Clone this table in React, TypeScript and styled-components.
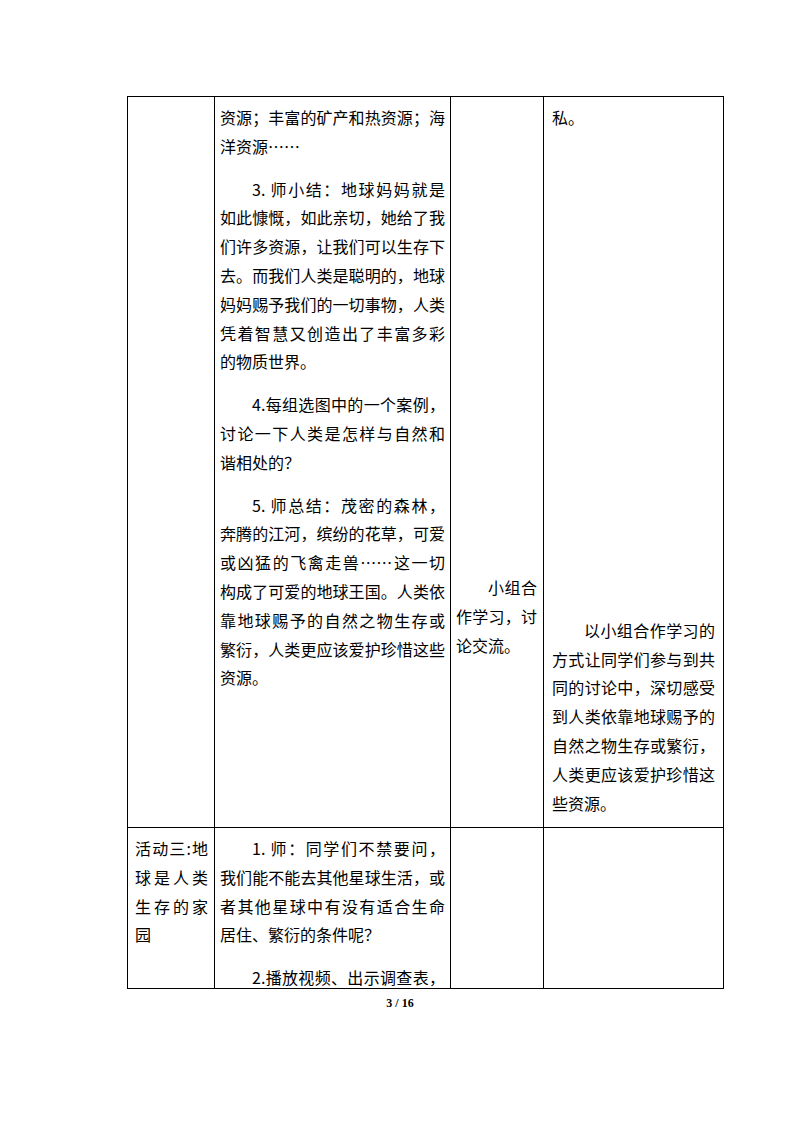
import React from "react";
import styled, { createGlobalStyle } from "styled-components";

const GlobalStyle = createGlobalStyle`
  html, body {
    margin: 0;
    padding: 0;
    background: #ffffff;
  }
  body {
    font-family: "Noto Sans CJK SC", "Noto Sans", sans-serif;
    color: #000;
  }
`;

const Page = styled.div`
  width: 794px;
  height: 1123px;
  box-sizing: border-box;
  padding-top: 96px;
  background: #fff;
  overflow: hidden;
`;

const Table = styled.div`
  margin-left: 127px;
  width: 597px;
  display: grid;
  grid-template-columns: 87px 236px 93px 180px;
  grid-template-rows: 731px 161px;
  border-left: 1px solid #000;
  border-top: 1px solid #000;
  box-sizing: border-box;
`;

const Cell = styled.div<{ $padL: number; $padR: number; $padT?: number }>`
  border-right: 1px solid #000;
  border-bottom: 1px solid #000;
  box-sizing: border-box;
  padding: ${(p) => p.$padT ?? 6}px ${(p) => p.$padR}px 0 ${(p) => p.$padL}px;
  overflow: hidden;
  font-family: "Noto Sans CJK SC", sans-serif;
  font-size: 16px;
  line-height: 28.8px;
`;

const Para = styled.div<{ $gap?: number; $indent?: boolean }>`
  margin-top: ${(p) => p.$gap ?? 0}px;
  & > span:first-child {
    text-indent: ${(p) => (p.$indent ? "2em" : "0")};
  }
`;

const Line = styled.span<{ $last?: boolean }>`
  display: block;
  text-align: ${(p) => (p.$last ? "left" : "justify")};
  text-align-last: ${(p) => (p.$last ? "left" : "justify")};
  text-justify: inter-character;
`;

const PageNumber = styled.div`
  margin-top: 7px;
  text-align: center;
  font-family: "Liberation Serif", "Times New Roman", serif;
  font-weight: bold;
  font-size: 12px;
  line-height: 14px;
  padding-left: 6px;
`;

type P = { lines: string[]; indent?: boolean; gap?: number; lastJustified?: boolean };

const Paragraph: React.FC<P> = ({ lines, indent, gap, lastJustified }) => (
  <Para $indent={indent} $gap={gap}>
    {lines.map((l, i) => (
      <Line key={i} $last={i === lines.length - 1 && !lastJustified}>
        {l}
      </Line>
    ))}
  </Para>
);

export default function App() {
  return (
    <>
      <GlobalStyle />
      <Page>
        <Table>
          <Cell $padL={7} $padR={6} />
          <Cell $padL={5} $padR={5}>
            <Paragraph lines={["资源；丰富的矿产和热资源；海", "洋资源……"]} />
            <Paragraph
              indent
              gap={14}
              lines={[
                "3. 师小结：地球妈妈就是",
                "如此慷慨，如此亲切，她给了我",
                "们许多资源，让我们可以生存下",
                "去。而我们人类是聪明的，地球",
                "妈妈赐予我们的一切事物，人类",
                "凭着智慧又创造出了丰富多彩",
                "的物质世界。",
              ]}
            />
            <Paragraph
              indent
              gap={14}
              lines={["4.每组选图中的一个案例，", "讨论一下人类是怎样与自然和", "谐相处的？"]}
            />
            <Paragraph
              indent
              gap={14}
              lines={[
                "5. 师总结：茂密的森林，",
                "奔腾的江河，缤纷的花草，可爱",
                "或凶猛的飞禽走兽……这一切",
                "构成了可爱的地球王国。人类依",
                "靠地球赐予的自然之物生存或",
                "繁衍，人类更应该爱护珍惜这些",
                "资源。",
              ]}
            />
          </Cell>
          <Cell $padL={5} $padR={6} $padT={476}>
            <Paragraph indent lines={["小组合", "作学习，讨", "论交流。"]} />
          </Cell>
          <Cell $padL={8} $padR={8}>
            <Paragraph lines={["私。"]} />
            <Paragraph
              indent
              gap={484}
              lines={[
                "以小组合作学习的",
                "方式让同学们参与到共",
                "同的讨论中，深切感受",
                "到人类依靠地球赐予的",
                "自然之物生存或繁衍，",
                "人类更应该爱护珍惜这",
                "些资源。",
              ]}
            />
          </Cell>

          <Cell $padL={7} $padR={6}>
            <Paragraph lines={["活动三:地", "球是人类", "生存的家", "园"]} />
          </Cell>
          <Cell $padL={5} $padR={5}>
            <Paragraph
              indent
              lines={[
                "1. 师：同学们不禁要问，",
                "我们能不能去其他星球生活，或",
                "者其他星球中有没有适合生命",
                "居住、繁衍的条件呢？",
              ]}
            />
            <Paragraph indent gap={14} lines={["2.播放视频、出示调查表，"]} lastJustified />
          </Cell>
          <Cell $padL={5} $padR={6} />
          <Cell $padL={8} $padR={8} />
        </Table>
        <PageNumber>3 / 16</PageNumber>
      </Page>
    </>
  );
}
